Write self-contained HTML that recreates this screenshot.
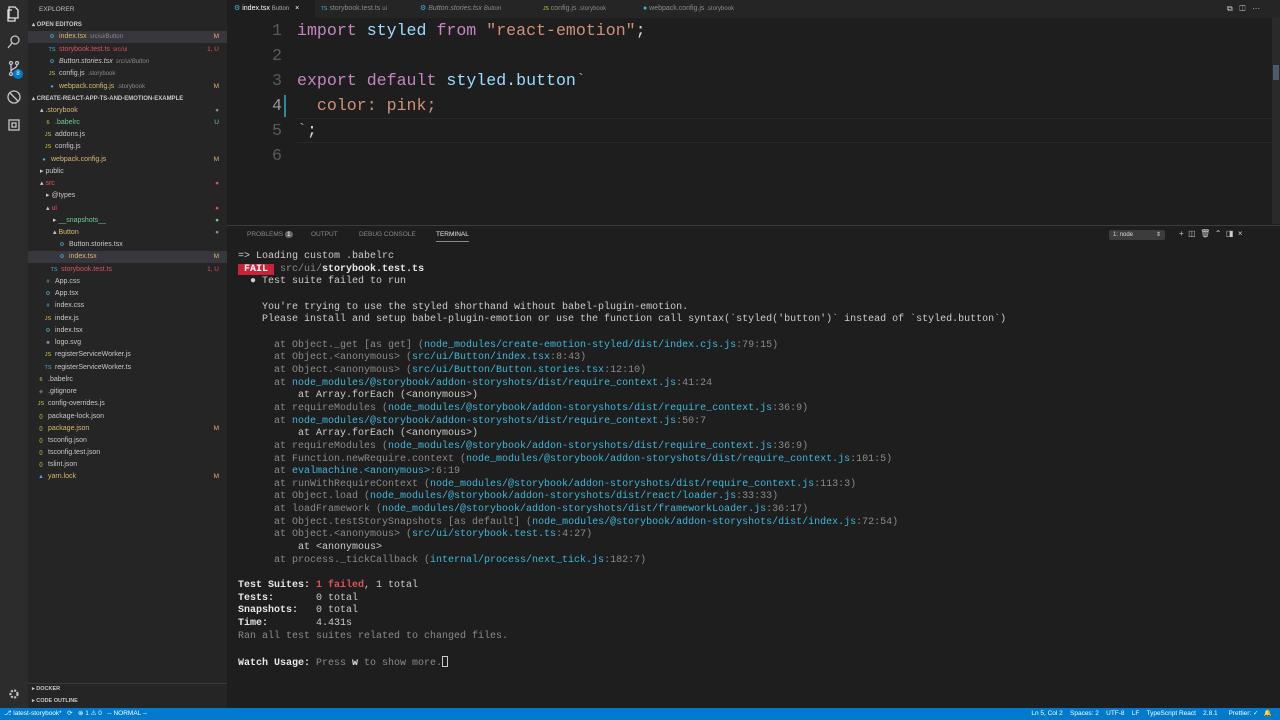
<!DOCTYPE html>
<html><head><meta charset="utf-8"><style>
*{margin:0;padding:0;box-sizing:border-box}
body{width:1280px;height:720px;background:#1e1e1e;overflow:hidden;position:relative;font-family:"Liberation Sans",sans-serif}
.abs{position:absolute}
#act{left:0;top:0;width:28px;height:708px;background:#2c2c2c}
#side{left:28px;top:0;width:199px;height:708px;background:#252526}
.r{position:absolute;left:0;width:199px;height:12px;font-size:7px;line-height:12px;color:#c8c8c8;white-space:nowrap}
.r .b{position:absolute;right:8px;top:0;font-size:6.5px}
.d{color:#8a8a8a;font-size:6px;margin-left:3px}
.y{color:#d9b96d}.red{color:#e0505a}.g{color:#73c991}
.ic{display:inline-block;width:8px;font-size:5.5px;margin-right:3px;text-align:center}
#tabs{left:227px;top:0;width:1053px;height:18px;background:#252526}
.tab{position:absolute;top:0;height:18px;font-size:7px;line-height:18px;color:#8a8a8a;white-space:nowrap}
#code{left:227px;top:18px;font-family:"Liberation Mono",monospace;font-size:16.6px;line-height:25px}
.ln{position:absolute;width:55px;text-align:right;color:#5a5a5a}
.cl{position:absolute;left:70px;white-space:pre;color:#d4d4d4}
.k{color:#c586c0}.v{color:#9cdcfe}.s{color:#ce9178}
#panel{left:227px;top:225px;width:1053px;height:483px;background:#1e1e1e;border-top:1px solid #3c3c3c}
.pt{position:absolute;top:5px;font-size:6.5px;color:#8a8a8a}
#term{left:238px;top:251px;font-family:"Liberation Mono",monospace;font-size:10px;line-height:12.66px;color:#cccccc;white-space:pre}
.gr{color:#8a8a8a}.c{color:#3fb7d9}.bd{font-weight:bold;color:#e6e6e6}
#status{left:0;top:708px;width:1280px;height:12px;background:#007acc;color:#fff;font-size:6.5px;line-height:12px;white-space:pre}
</style></head><body>
<div id="act" class="abs">
<svg width="28" height="140" style="position:absolute;left:0;top:0" fill="none" stroke="#c5c5c5" stroke-width="1.3">
<path d="M9 7h6l3 3v8h-9z M12 10h-4v11h7v-3" stroke="#e0e0e0"/>
<circle cx="15" cy="40" r="4"/><path d="M12 43l-4 5"/>
<circle cx="11" cy="63" r="1.5"/><circle cx="17" cy="63" r="1.5"/><circle cx="11" cy="74" r="1.5"/><path d="M11 65v7M17 65c0 4-6 3-6 7"/>
<circle cx="14" cy="97" r="6"/><path d="M10 93l8 8"/>
<rect x="9" y="120" width="10" height="10"/><rect x="12" y="123" width="4" height="4"/>
</svg>
<div class="abs" style="left:13px;top:69px;width:10px;height:10px;border-radius:5px;background:#007acc;color:#fff;font-size:6px;line-height:10px;text-align:center">8</div>
<svg class="abs" style="left:8px;top:688px" width="12" height="12"><circle cx="6" cy="6" r="3.5" fill="none" stroke="#c5c5c5" stroke-width="2.2" stroke-dasharray="2 1.3"/></svg>
</div>
<div id="side" class="abs">
<div class="r" style="top:4px;left:11px;color:#bbb;font-size:6.5px">EXPLORER</div>
<div class="r" style="top:19px;left:4px;font-weight:bold;font-size:6px">▴ OPEN EDITORS</div>
<div class="r" style="top:31px;background:#37373d"><span style="margin-left:20px" class="ic c">⚙</span><span class="y">index.tsx</span><span class="d">src/ui/Button</span><span class="b y">M</span></div>
<div class="r" style="top:43.5px"><span style="margin-left:20px" class="ic c">TS</span><span class="red">storybook.test.ts</span><span class="d red">src/ui</span><span class="b red">1, U</span></div>
<div class="r" style="top:56px"><span style="margin-left:20px" class="ic c">⚙</span><span style="font-style:italic">Button.stories.tsx</span><span class="d" style="font-style:italic">src/ui/Button</span></div>
<div class="r" style="top:68px"><span style="margin-left:20px;color:#cbcb41" class="ic">JS</span>config.js<span class="d">.storybook</span></div>
<div class="r" style="top:80.5px"><span style="margin-left:20px" class="ic c">●</span><span class="y">webpack.config.js</span><span class="d">.storybook</span><span class="b y">M</span></div>
<div class="r" style="top:92.5px;left:4px;font-weight:bold;font-size:6px">▴ CREATE-REACT-APP-TS-AND-EMOTION-EXAMPLE</div>
<div class="r" style="top:104.5px"><span style="margin-left:12px">▴ </span><span class="y">.storybook</span><span class="b gr">●</span></div>
<div class="r" style="top:117px"><span style="margin-left:16px;color:#cbcb41" class="ic">6</span><span class="g">.babelrc</span><span class="b g">U</span></div>
<div class="r" style="top:129px"><span style="margin-left:16px;color:#cbcb41" class="ic">JS</span>addons.js</div>
<div class="r" style="top:141px"><span style="margin-left:16px;color:#cbcb41" class="ic">JS</span>config.js</div>
<div class="r" style="top:153.5px"><span style="margin-left:12px" class="ic c">●</span><span class="y">webpack.config.js</span><span class="b y">M</span></div>
<div class="r" style="top:166px"><span style="margin-left:12px">▸ </span>public</div>
<div class="r" style="top:178px"><span style="margin-left:12px">▴ </span><span class="red">src</span><span class="b red">●</span></div>
<div class="r" style="top:190px"><span style="margin-left:18px">▸ </span>@types</div>
<div class="r" style="top:202.5px"><span style="margin-left:18px">▴ </span><span class="red">ui</span><span class="b red">●</span></div>
<div class="r" style="top:215px"><span style="margin-left:25px">▸ </span><span class="g">__snapshots__</span><span class="b g">●</span></div>
<div class="r" style="top:227px"><span style="margin-left:25px">▴ </span><span class="y">Button</span><span class="b gr">●</span></div>
<div class="r" style="top:239px"><span style="margin-left:30px" class="ic c">⚙</span>Button.stories.tsx</div>
<div class="r" style="top:251px;background:#37373d"><span style="margin-left:30px" class="ic c">⚙</span><span class="y">index.tsx</span><span class="b y">M</span></div>
<div class="r" style="top:263.5px"><span style="margin-left:22px" class="ic c">TS</span><span class="red">storybook.test.ts</span><span class="b red">1, U</span></div>
<div class="r" style="top:276px"><span style="margin-left:16px" class="ic c">#</span>App.css</div>
<div class="r" style="top:288px"><span style="margin-left:16px" class="ic c">⚙</span>App.tsx</div>
<div class="r" style="top:300px"><span style="margin-left:16px" class="ic c">#</span>index.css</div>
<div class="r" style="top:312.5px"><span style="margin-left:16px;color:#cbcb41" class="ic">JS</span>index.js</div>
<div class="r" style="top:324.5px"><span style="margin-left:16px" class="ic c">⚙</span>index.tsx</div>
<div class="r" style="top:337px"><span style="margin-left:16px;color:#a074c4" class="ic">■</span>logo.svg</div>
<div class="r" style="top:349px"><span style="margin-left:16px;color:#cbcb41" class="ic">JS</span>registerServiceWorker.js</div>
<div class="r" style="top:361.5px"><span style="margin-left:16px" class="ic c">TS</span>registerServiceWorker.ts</div>
<div class="r" style="top:374px"><span style="margin-left:9px;color:#cbcb41" class="ic">6</span>.babelrc</div>
<div class="r" style="top:386px"><span style="margin-left:9px;color:#666" class="ic">◆</span>.gitignore</div>
<div class="r" style="top:398px"><span style="margin-left:9px;color:#cbcb41" class="ic">JS</span>config-overrides.js</div>
<div class="r" style="top:410.5px"><span style="margin-left:9px;color:#cbcb41" class="ic">{}</span>package-lock.json</div>
<div class="r" style="top:422.5px"><span style="margin-left:9px;color:#cbcb41" class="ic">{}</span><span class="y">package.json</span><span class="b y">M</span></div>
<div class="r" style="top:435px"><span style="margin-left:9px;color:#cbcb41" class="ic">{}</span>tsconfig.json</div>
<div class="r" style="top:447px"><span style="margin-left:9px;color:#cbcb41" class="ic">{}</span>tsconfig.test.json</div>
<div class="r" style="top:459px"><span style="margin-left:9px;color:#cbcb41" class="ic">{}</span>tslint.json</div>
<div class="r" style="top:471px"><span style="margin-left:9px" class="ic c">▲</span><span class="y">yarn.lock</span><span class="b y">M</span></div>
<div class="abs" style="left:0;top:683px;width:199px;height:1px;background:#3a3a3a"></div>
<div class="r" style="top:683px;left:4px;font-size:5.5px;font-weight:bold">▸ DOCKER</div>
<div class="r" style="top:695px;left:4px;font-size:5.5px;font-weight:bold">▸ CODE OUTLINE</div>
</div>
<div id="tabs" class="abs">
<div class="tab" style="left:0;width:88px;background:#1e1e1e;color:#fff;padding-left:7px"><span class="c">⚙</span> index.tsx <span style="color:#aaa;font-size:6px">Button</span> <span style="margin-left:4px">×</span></div>
<div class="tab" style="left:94px"><span class="c" style="font-size:5px">TS</span> storybook.test.ts <span style="font-size:6px">ui</span></div>
<div class="tab" style="left:193px"><span class="c">⚙</span> <i>Button.stories.tsx <span style="font-size:6px">Button</span></i></div>
<div class="tab" style="left:316px"><span style="color:#cbcb41;font-size:5px">JS</span> config.js <span style="font-size:6px">.storybook</span></div>
<div class="tab" style="left:416px"><span class="c">●</span> webpack.config.js <span style="font-size:6px">.storybook</span></div>
<div class="tab" style="left:1000px;color:#ccc;font-size:8px">⧉ &nbsp; ◫ &nbsp; ···</div>
</div>
<div class="abs" style="left:1272px;top:18px;width:8px;height:206px;background:#2a2a2a"></div>
<div class="abs" style="left:1273px;top:65px;width:6px;height:15px;background:#4a5a66"></div>
<div id="code" class="abs">
<div class="ln" style="top:0">1</div><div class="cl" style="top:0"><span class="k">import</span> <span class="v">styled</span> <span class="k">from</span> <span class="s">"react-emotion"</span>;</div>
<div class="ln" style="top:25px">2</div>
<div class="ln" style="top:50px">3</div><div class="cl" style="top:50px"><span class="k">export</span> <span class="k">default</span> <span class="v">styled.button</span><span class="s">`</span></div>
<div class="ln" style="top:75px;color:#999">4</div><div class="cl" style="top:75px"><span class="s">  color: pink;</span></div>
<div class="ln" style="top:100px">5</div><div class="cl" style="top:100px"><span class="s">`</span>;</div>
<div class="ln" style="top:125px">6</div>
</div>
<div class="abs" style="left:284px;top:95px;width:2px;height:22px;background:#2a8a9a"></div>
<div class="abs" style="left:297px;top:118px;width:975px;height:25px;border-top:1px solid #2a2a2a;border-bottom:1px solid #2a2a2a"></div>
<div id="panel" class="abs">
<div class="pt" style="left:20px">PROBLEMS <span style="background:#666;color:#fff;border-radius:4px;padding:0 2px">1</span></div>
<div class="pt" style="left:84px">OUTPUT</div>
<div class="pt" style="left:132px">DEBUG CONSOLE</div>
<div class="pt" style="left:209px;color:#e7e7e7;border-bottom:1px solid #888;padding-bottom:3px">TERMINAL</div>
<div class="abs" style="left:882px;top:4px;width:56px;height:10px;background:#3c3c3c;color:#ddd;font-size:6px;line-height:10px;padding-left:4px;border-radius:2px">1: node<span style="float:right;margin-right:4px">⇕</span></div>
<div class="pt" style="left:952px;top:3px;color:#ccc;font-size:8px;letter-spacing:0">+ &nbsp;◫ &nbsp;🗑 &nbsp;⌃ &nbsp;◨ &nbsp;×</div>
</div>
<div id="term" class="abs">=&gt; Loading custom .babelrc
<span style="background:#c7243a;color:#fff;font-weight:bold"> FAIL </span> <span class="gr">src/ui/</span><span class="bd">storybook.test.ts</span>
  ● Test suite failed to run

    You're trying to use the styled shorthand without babel-plugin-emotion.
    Please install and setup babel-plugin-emotion or use the function call syntax(`styled('button')` instead of `styled.button`)

<span class="gr">      at Object._get [as get] (<span class="c">node_modules/create-emotion-styled/dist/index.cjs.js</span>:79:15)
      at Object.&lt;anonymous&gt; (<span class="c">src/ui/Button/index.tsx</span>:8:43)
      at Object.&lt;anonymous&gt; (<span class="c">src/ui/Button/Button.stories.tsx</span>:12:10)
      at <span class="c">node_modules/@storybook/addon-storyshots/dist/require_context.js</span>:41:24</span>
          at Array.forEach (&lt;anonymous&gt;)
<span class="gr">      at requireModules (<span class="c">node_modules/@storybook/addon-storyshots/dist/require_context.js</span>:36:9)
      at <span class="c">node_modules/@storybook/addon-storyshots/dist/require_context.js</span>:50:7</span>
          at Array.forEach (&lt;anonymous&gt;)
<span class="gr">      at requireModules (<span class="c">node_modules/@storybook/addon-storyshots/dist/require_context.js</span>:36:9)
      at Function.newRequire.context (<span class="c">node_modules/@storybook/addon-storyshots/dist/require_context.js</span>:101:5)
      at <span class="c">evalmachine.&lt;anonymous&gt;</span>:6:19
      at runWithRequireContext (<span class="c">node_modules/@storybook/addon-storyshots/dist/require_context.js</span>:113:3)
      at Object.load (<span class="c">node_modules/@storybook/addon-storyshots/dist/react/loader.js</span>:33:33)
      at loadFramework (<span class="c">node_modules/@storybook/addon-storyshots/dist/frameworkLoader.js</span>:36:17)
      at Object.testStorySnapshots [as default] (<span class="c">node_modules/@storybook/addon-storyshots/dist/index.js</span>:72:54)
      at Object.&lt;anonymous&gt; (<span class="c">src/ui/storybook.test.ts</span>:4:27)</span>
          at &lt;anonymous&gt;
<span class="gr">      at process._tickCallback (<span class="c">internal/process/next_tick.js</span>:182:7)</span>

<span class="bd">Test Suites: </span><span style="color:#e0505a;font-weight:bold">1 failed</span>, 1 total
<span class="bd">Tests:       </span>0 total
<span class="bd">Snapshots:   </span>0 total
<span class="bd">Time:        </span>4.431s
<span class="gr">Ran all test suites related to changed files.</span>

<span class="bd">Watch Usage: </span><span class="gr">Press </span><span class="bd">w</span><span class="gr"> to show more.</span><span style="display:inline-block;width:6px;height:11px;border:1px solid #ccc;vertical-align:-2px"></span></div>
<div id="status" class="abs"><span style="position:absolute;left:4px">⎇ latest-storybook*   ⟳   ⊗ 1 ⚠ 0   -- NORMAL --</span><span style="position:absolute;right:8px">Ln 5, Col 2    Spaces: 2    UTF-8    LF    TypeScript React    2.8.1      Prettier: ✓   🔔</span></div>
</body></html>
